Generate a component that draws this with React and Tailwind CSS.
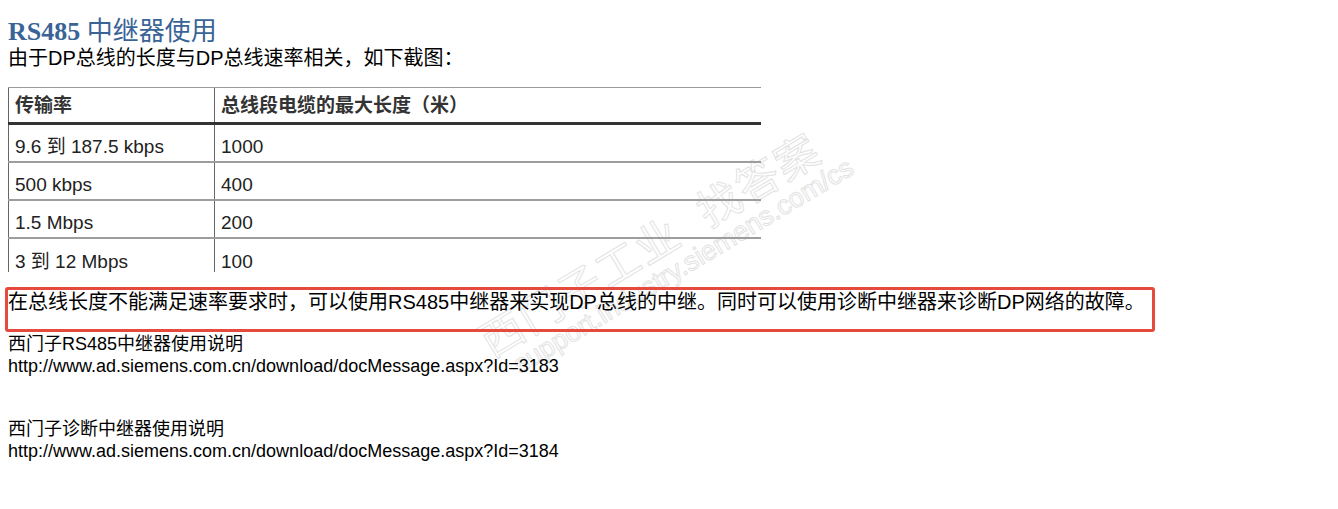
const rows = [
  ['9.6 到 187.5 kbps', '1000'],
  ['500 kbps', '400'],
  ['1.5 Mbps', '200'],
  ['3 到 12 Mbps', '100'],
];

const sans = "font-['Liberation_Sans','Noto_Sans_CJK_SC',sans-serif]";

const Watermark = () => (
  <div className="pointer-events-none absolute left-[472px] top-[325px] z-0 origin-top-left -rotate-[31deg] select-none whitespace-nowrap text-transparent [-webkit-text-stroke:1px_#e3e3e3] font-['Liberation_Sans','Noto_Sans_CJK_SC',sans-serif]">
    <div className="text-[43px] leading-[48px] tracking-[2px]">西门子工业&nbsp;&nbsp;找答案</div>
    <div className="-mt-[6px] ml-[16px] text-[27px] leading-[32px]">support.industry.siemens.com/cs</div>
  </div>
);

const SpeedTable = () => (
  <div className={`mt-[18px] h-[185px] w-[753px] overflow-hidden text-[19px] text-[#222] ${sans}`}>
    <div className="flex h-[35px] border-t border-[#9a9a9a]">
      <div className="flex w-[207px] shrink-0 items-center border-l border-r border-[#666] pl-[6px] pt-[2px] font-bold text-[#333]">传输率</div>
      <div className="flex items-center pl-[6px] pt-[2px] font-bold text-[#333]">总线段电缆的最大长度（米）</div>
    </div>
    <div className="h-[3px] bg-[#333]" />
    {rows.map(([rate, len], i) => (
      <div key={rate} className={`flex h-[38px] ${i < rows.length - 1 ? 'border-b-2 border-[#9d9d9d]' : ''}`}>
        <div className="flex w-[207px] shrink-0 items-center border-l border-r border-[#666] pl-[6px] pt-[8px]">{rate}</div>
        <div className="flex items-center pl-[6px] pt-[8px]">{len}</div>
      </div>
    ))}
  </div>
);

export default function App() {
  return (
    <div className="relative h-[509px] w-full overflow-hidden bg-white pl-[8px] text-black">
      <Watermark />
      <div className="relative z-10">
        <h1 className="pt-[17px] text-[26px] leading-[30px] text-[#3a6496] font-['Liberation_Serif','Noto_Sans_CJK_SC',serif]">
          <span className="font-bold">RS485</span> <span className="font-normal">中继器使用</span>
        </h1>
        <p className={`text-[20px] leading-[22px] ${sans}`}>由于DP总线的长度与DP总线速率相关，如下截图：</p>

        <SpeedTable />

        <div className={`-ml-[3px] mt-[15px] h-[45px] w-[1150px] rounded-[3px] border-[3px] border-[#e64a3e] pt-[1px] text-[20px] leading-[22px] ${sans}`}>
          在总线长度不能满足速率要求时，可以使用RS485中继器来实现DP总线的中继。同时可以使用诊断中继器来诊断DP网络的故障。
        </div>

        <div className={`mt-[1px] text-[18px] leading-[22px] ${sans}`}>
          <p>西门子RS485中继器使用说明</p>
          <p>http://www.ad.siemens.com.cn/download/docMessage.aspx?Id=3183</p>
          <p className="mt-[41px]">西门子诊断中继器使用说明</p>
          <p>http://www.ad.siemens.com.cn/download/docMessage.aspx?Id=3184</p>
        </div>
      </div>
    </div>
  );
}
